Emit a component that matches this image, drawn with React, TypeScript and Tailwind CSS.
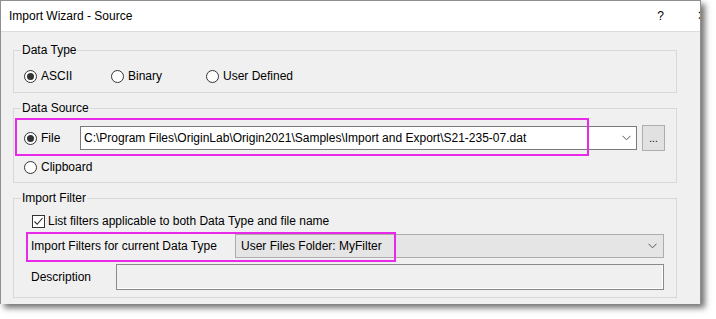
import React from "react";

const FONT = { fontFamily: '"Liberation Sans", Arial, sans-serif' };

function Radio({ checked }: { checked?: boolean }) {
  return (
    <span className="relative flex h-[13px] w-[13px] shrink-0 items-center justify-center rounded-full border border-[#333333] bg-white">
      {checked && <span className="h-[7px] w-[7px] rounded-full bg-[#333333]" />}
    </span>
  );
}

function Chevron() {
  return (
    <svg width="9" height="6" viewBox="0 0 9 6" className="shrink-0">
      <polyline points="0.5,0.8 4.5,4.8 8.5,0.8" fill="none" stroke="#555" strokeWidth="1" />
    </svg>
  );
}

function Group({ title, children, className }: { title: string; children: React.ReactNode; className?: string }) {
  return (
    <fieldset className="border border-[#d8d8d8]">
      <legend className="ml-[7px] px-[1px] leading-[16px]">{title}</legend>
      <div className={className}>{children}</div>
    </fieldset>
  );
}

export default function App() {
  return (
    <div className="relative h-[319px] w-[716px] bg-white text-[12px] text-black" style={FONT}>
      <div className="flex h-[304px] w-[701px] flex-col border-x border-t border-[#8f8f8f] bg-white shadow-[4px_4px_6px_rgba(0,0,0,0.55)]">
        {/* title bar */}
        <div className="flex h-[31px] shrink-0 items-center overflow-hidden border-b border-[#dcdcdc] bg-white">
          <span className="ml-[8px] leading-[16px]">Import Wizard - Source</span>
          <span className="ml-auto mr-[33px] leading-[16px]">?</span>
          <span className="mr-[-8px] leading-[16px] text-[13px]">✕</span>
        </div>
        {/* body */}
        <div className="flex flex-1 flex-col gap-[7px] bg-[#f0f0f0] pl-[12px] pr-[23px] pt-[10px]">
          <Group title="Data Type" className="pb-[8px] pl-[10px] pt-[10px]">
            <div className="flex h-[16px] items-center">
              <label className="flex w-[87px] items-center gap-[4px]">
                <Radio checked />
                <span>ASCII</span>
              </label>
              <label className="flex w-[95px] items-center gap-[4px]">
                <Radio />
                <span>Binary</span>
              </label>
              <label className="flex items-center gap-[4px]">
                <Radio />
                <span>User Defined</span>
              </label>
            </div>
          </Group>

          <Group title="Data Source" className="pb-[7px] pl-[10px] pt-[9px]">
            <div className="flex h-[26px] items-center">
              <label className="flex w-[56px] items-center gap-[4px]">
                <Radio checked />
                <span>File</span>
              </label>
              <div className="flex h-[24px] w-[557px] items-center border border-[#7a7a7a] bg-white pl-[3px] pr-[5px]">
                <span className="flex-1 whitespace-nowrap">
                  C:\Program Files\OriginLab\Origin2021\Samples\Import and Export\S21-235-07.dat
                </span>
                <Chevron />
              </div>
              <button className="ml-[5px] flex h-[26px] w-[23px] items-end justify-center border border-[#adadad] bg-[#e1e1e1] pb-[6px] leading-[10px] text-[10px]">
                ...
              </button>
            </div>
            <div className="mt-[8px] flex h-[16px] items-center">
              <label className="flex items-center gap-[4px]">
                <Radio />
                <span>Clipboard</span>
              </label>
            </div>
          </Group>

          <Group title="Import Filter" className="pb-[7px] pl-[17px] pt-[7px]">
            <div className="flex h-[16px] items-center gap-[3px] pl-[1px]">
              <span className="flex h-[13px] w-[13px] items-center justify-center border border-[#333333] bg-white">
                <svg width="11" height="11" viewBox="0 0 11 11">
                  <polyline points="1.5,5.5 4.2,8.3 9.5,2" fill="none" stroke="#222" strokeWidth="1.1" />
                </svg>
              </span>
              <span>List filters applicable to both Data Type and file name</span>
            </div>
            <div className="mt-[5px] flex h-[24px] items-center">
              <span className="w-[204px]">Import Filters for current Data Type</span>
              <div className="flex h-[24px] w-[429px] items-center border border-[#adadad] bg-[#e5e5e5] pl-[5px] pr-[6px]">
                <span className="flex-1">User Files Folder: MyFilter</span>
                <Chevron />
              </div>
            </div>
            <div className="mt-[6px] flex h-[26px] items-center">
              <span className="w-[85px]">Description</span>
              <div className="h-[26px] w-[548px] border border-[#8a8a8a] bg-[#f0f0f0] shadow-[inset_-1px_-1px_0_#ffffff]" />
            </div>
          </Group>
        </div>
      </div>

      {/* annotation highlights */}
      <div className="pointer-events-none absolute left-[15px] top-[118px] h-[38px] w-[574px] border-2 border-[#e82ae8]" />
      <div className="pointer-events-none absolute left-[26px] top-[232px] h-[30px] w-[370px] border-2 border-[#e82ae8]" />
    </div>
  );
}
